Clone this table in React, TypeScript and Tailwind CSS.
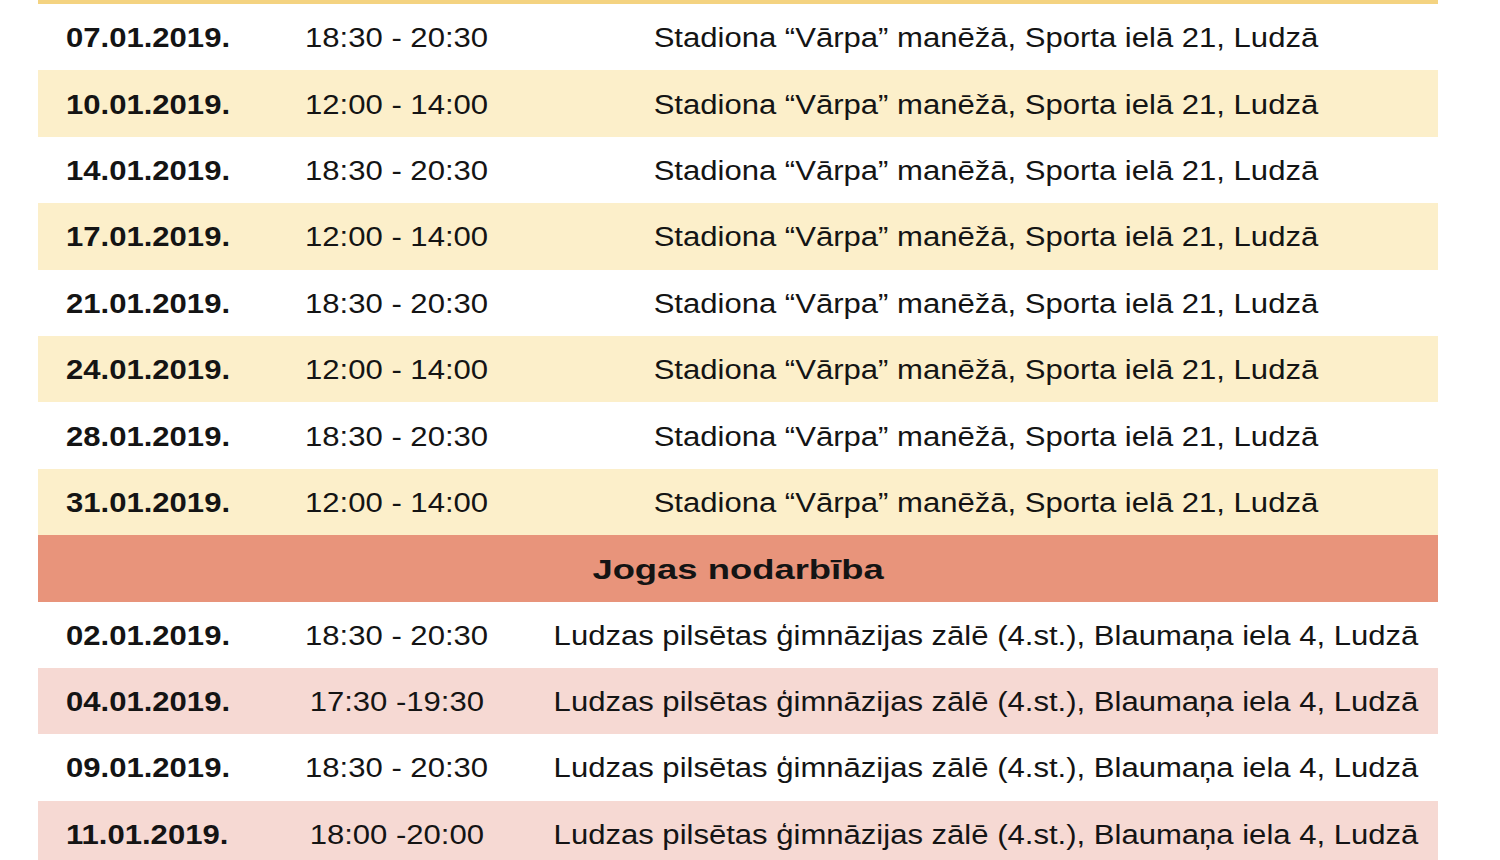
import React from "react";

type Row = { date: string; time: string; place: string; shade: boolean };

const stadions = "Stadiona \u201CVārpa\u201D manēžā, Sporta ielā 21, Ludzā";
const gimn = "Ludzas pilsētas ģimnāzijas zālē (4.st.), Blaumaņa iela 4, Ludzā";

const rows1: Row[] = [
  { date: "07.01.2019.", time: "18:30 - 20:30", place: stadions, shade: false },
  { date: "10.01.2019.", time: "12:00 - 14:00", place: stadions, shade: true },
  { date: "14.01.2019.", time: "18:30 - 20:30", place: stadions, shade: false },
  { date: "17.01.2019.", time: "12:00 - 14:00", place: stadions, shade: true },
  { date: "21.01.2019.", time: "18:30 - 20:30", place: stadions, shade: false },
  { date: "24.01.2019.", time: "12:00 - 14:00", place: stadions, shade: true },
  { date: "28.01.2019.", time: "18:30 - 20:30", place: stadions, shade: false },
  { date: "31.01.2019.", time: "12:00 - 14:00", place: stadions, shade: true },
];

const rows2: Row[] = [
  { date: "02.01.2019.", time: "18:30 - 20:30", place: gimn, shade: false },
  { date: "04.01.2019.", time: "17:30 -19:30", place: gimn, shade: true },
  { date: "09.01.2019.", time: "18:30 - 20:30", place: gimn, shade: false },
  { date: "11.01.2019.", time: "18:00 -20:00", place: gimn, shade: true },
];

function TableRow({ r, shadeClass }: { r: Row; shadeClass: string }) {
  return (
    <div className={`flex h-[66.4px] shrink-0 items-center pt-[3px] ${r.shade ? shadeClass : "bg-white"}`}>
      <div className="w-[222px] shrink-0 pl-[28px]">
        <span className="inline-block origin-left scale-x-[1.15] font-bold whitespace-nowrap">{r.date}</span>
      </div>
      <div className="flex w-[274px] shrink-0 justify-center">
        <span className="inline-block scale-x-[1.15] whitespace-nowrap">{r.time}</span>
      </div>
      <div className="flex flex-1 justify-center">
        <span className="inline-block scale-x-[1.15] whitespace-nowrap">{r.place}</span>
      </div>
    </div>
  );
}

export default function App() {
  return (
    <div
      className="h-[860px] w-[1500px] overflow-hidden bg-white text-[27px] leading-none text-[#141414]"
      style={{ fontFamily: '"Liberation Sans", Arial, sans-serif' }}
    >
      <div className="ml-[38px] flex w-[1400px] flex-col">
        <div className="h-[4px] shrink-0 bg-[#f4d381]" />
        {rows1.map((r, i) => (
          <TableRow key={"a" + i} r={r} shadeClass="bg-[#fcefca]" />
        ))}
        <div className="flex h-[66.4px] shrink-0 items-center justify-center bg-[#e8947b] pt-[3px]">
          <span className="inline-block scale-x-[1.3] text-[28px] font-bold">Jogas nodarbība</span>
        </div>
        {rows2.map((r, i) => (
          <TableRow key={"b" + i} r={r} shadeClass="bg-[#f6d9d3]" />
        ))}
      </div>
    </div>
  );
}
